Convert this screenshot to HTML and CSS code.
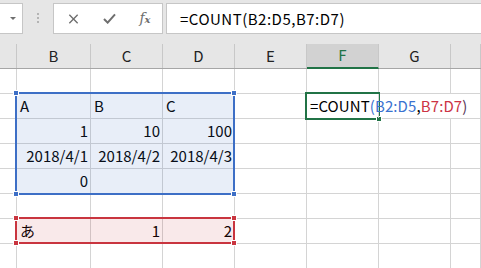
FILE: index.html
```html
<!DOCTYPE html>
<html lang="ja">
<head>
    <meta charset="UTF-8">
    <title>COUNT</title>
    <link rel="stylesheet" href="styles.css">
</head>
<body>
    <div class="formula-row">
        <div class="name-box"><span class="dropdown"></span></div>
        <div class="grip"><i></i><i></i><i></i></div>
        <div class="fx-buttons">
            <svg class="icon" viewBox="0 0 12 12"><path d="M1 1 L11 11 M11 1 L1 11" stroke="#6e6e6e" stroke-width="1.6" fill="none"/></svg>
            <svg class="icon" viewBox="0 0 14 12"><path d="M1 6.5 L5 10.5 L13 1.5" stroke="#6e6e6e" stroke-width="2.2" fill="none"/></svg>
            <span class="fx">f<small>x</small></span>
        </div>
        <div class="formula-input">=COUNT(B2:D5,B7:D7)</div>
    </div>

    <div class="sheet">
        <div class="row head">
            <div class="cell"></div>
            <div class="cell">B</div>
            <div class="cell">C</div>
            <div class="cell">D</div>
            <div class="cell">E</div>
            <div class="cell active">F</div>
            <div class="cell">G</div>
            <div class="cell"></div>
        </div>
        <div class="row">
            <div class="cell"></div><div class="cell"></div><div class="cell"></div><div class="cell"></div>
            <div class="cell"></div><div class="cell"></div><div class="cell"></div><div class="cell"></div>
        </div>
        <div class="row">
            <div class="cell"></div>
            <div class="cell">A</div>
            <div class="cell">B</div>
            <div class="cell">C</div>
            <div class="cell"></div>
            <div class="cell formula">=COUNT<span class="p1">(</span><span class="ref-blue">B2:D5</span>,<span class="ref-red">B7:D7</span><span class="p2">)</span></div>
            <div class="cell no-line"></div>
            <div class="cell"></div>
        </div>
        <div class="row">
            <div class="cell"></div>
            <div class="cell num">1</div>
            <div class="cell num">10</div>
            <div class="cell num">100</div>
            <div class="cell"></div><div class="cell"></div><div class="cell"></div><div class="cell"></div>
        </div>
        <div class="row">
            <div class="cell"></div>
            <div class="cell num">2018/4/1</div>
            <div class="cell num">2018/4/2</div>
            <div class="cell num">2018/4/3</div>
            <div class="cell"></div><div class="cell"></div><div class="cell"></div><div class="cell"></div>
        </div>
        <div class="row">
            <div class="cell"></div>
            <div class="cell num">0</div>
            <div class="cell"></div><div class="cell"></div>
            <div class="cell"></div><div class="cell"></div><div class="cell"></div><div class="cell"></div>
        </div>
        <div class="row">
            <div class="cell"></div><div class="cell"></div><div class="cell"></div><div class="cell"></div>
            <div class="cell"></div><div class="cell"></div><div class="cell"></div><div class="cell"></div>
        </div>
        <div class="row">
            <div class="cell"></div>
            <div class="cell">あ</div>
            <div class="cell num">1</div>
            <div class="cell num">2</div>
            <div class="cell"></div><div class="cell"></div><div class="cell"></div><div class="cell"></div>
        </div>
        <div class="row">
            <div class="cell"></div><div class="cell"></div><div class="cell"></div><div class="cell"></div>
            <div class="cell"></div><div class="cell"></div><div class="cell"></div><div class="cell"></div>
        </div>

        <!-- 参照範囲の枠 -->
        <div class="range blue">
            <i class="h tl"></i><i class="h tr"></i><i class="h bl"></i><i class="h br"></i>
        </div>
        <div class="range red">
            <i class="h tl"></i><i class="h tr"></i><i class="h bl"></i><i class="h br"></i>
        </div>
        <div class="range green"><i class="fill-handle"></i></div>
    </div>
</body>
</html>
```

FILE: styles.css
```css
* {
    box-sizing: border-box;
}
body {
    margin: 0;
    width: 481px;
    height: 268px;
    overflow: hidden;
    background: #fff;
    color: #000;
    font-family: "Noto Sans CJK JP", "Noto Sans", sans-serif;
}

/* 数式バー */
.formula-row {
    display: flex;
    align-items: flex-start;
    height: 43px;
    padding-top: 3px;
    background: #e6e6e6;
}
.name-box {
    width: 23px;
    height: 31px;
    background: #fff;
    border: 1px solid #c6c6c6;
    border-left: none;
    display: flex;
    align-items: center;
    justify-content: center;
    padding-left: 3px;
}
.dropdown {
    width: 0;
    height: 0;
    border-left: 3px solid transparent;
    border-right: 3px solid transparent;
    border-top: 3px solid #6e6e6e;
}
.grip {
    display: flex;
    flex-direction: column;
    gap: 2px;
    margin: 10px 0 0 14px;
    width: 2px;
}
.grip i {
    display: block;
    width: 2px;
    height: 2px;
    background: #b4b4b4;
}
.fx-buttons {
    margin-left: 14px;
    width: 110px;
    height: 31px;
    background: #fff;
    border: 1px solid #c6c6c6;
    display: grid;
    grid-template-columns: 36px 36px 36px;
    align-items: center;
    justify-items: center;
    padding-left: 1px;
}
.icon {
    width: 11px;
    height: 10px;
}
.fx-buttons .icon + .icon {
    width: 13px;
    height: 11px;
}
.fx {
    font-family: "DejaVu Serif", "Liberation Serif", serif;
    font-style: italic;
    font-size: 14px;
    color: #6e6e6e;
    margin-top: -2px;
}
.fx small {
    font-size: 10px;
    font-weight: bold;
}
.formula-input {
    flex: 1;
    margin-left: 3px;
    height: 31px;
    background: #fff;
    border: 1px solid #c6c6c6;
    border-right: none;
    padding-left: 13px;
    font-size: 15px;
    letter-spacing: 0.5px;
    line-height: 29px;
    white-space: nowrap;
}

/* シート */
.sheet {
    position: relative;
}
.row {
    display: grid;
    grid-template-columns: 17px 74px 72px 72px 72px 72px 72px 30px;
    height: 25px;
    border-bottom: 1px solid #d4d4d4;
}
.cell {
    border-right: 1px solid #d4d4d4;
    font-size: 15px;
    line-height: 24px;
    padding: 0 3px;
    white-space: nowrap;
}
.cell.num {
    text-align: right;
    padding-right: 2px;
}
.cell.no-line {
    border-right-color: transparent;
}
.cell.formula {
    overflow: visible;
    position: relative;
    z-index: 1;
    letter-spacing: 0.1px;
}
.ref-blue, .p1 { color: #3a72d0; }
.ref-red { color: #cc3344; }
.p2 { color: #5a3a5a; }

.row.head {
    height: 26px;
    background: #e6e6e6;
    border-bottom: 1px solid #a6a6a6;
}
.row.head .cell {
    text-align: center;
    color: #222;
    border-right-color: #c8c8c8;
    margin-top: 1px;
    line-height: 24px;
}
.row.head .cell.active {
    background: #d2d2d2;
    color: #217346;
    border-bottom: 2px solid #217346;
    margin-bottom: -1px;
    line-height: 22px;
}

/* 範囲の枠 */
.range {
    position: absolute;
}
.range.blue {
    left: 15px;
    top: 49px;
    width: 220px;
    height: 103px;
    border: 2px solid #3d6fc6;
    background: rgba(68, 114, 196, 0.12);
}
.range.red {
    left: 15px;
    top: 174px;
    width: 220px;
    height: 27px;
    border: 2px solid #c9353f;
    background: rgba(200, 40, 50, 0.1);
}
.range.green {
    left: 305px;
    top: 49px;
    width: 75px;
    height: 28px;
    border: 2px solid #217346;
}
.h {
    position: absolute;
    width: 6px;
    height: 6px;
    border: 1px solid #fff;
}
.blue .h { background: #3d6fc6; }
.red .h { background: #c9353f; }
.h.tl { left: -4px; top: -4px; }
.h.tr { right: -4px; top: -4px; }
.h.bl { left: -4px; bottom: -4px; }
.h.br { right: -4px; bottom: -4px; }
.fill-handle {
    position: absolute;
    right: -4px;
    bottom: -4px;
    width: 6px;
    height: 6px;
    background: #217346;
    border: 1px solid #fff;
}
```
